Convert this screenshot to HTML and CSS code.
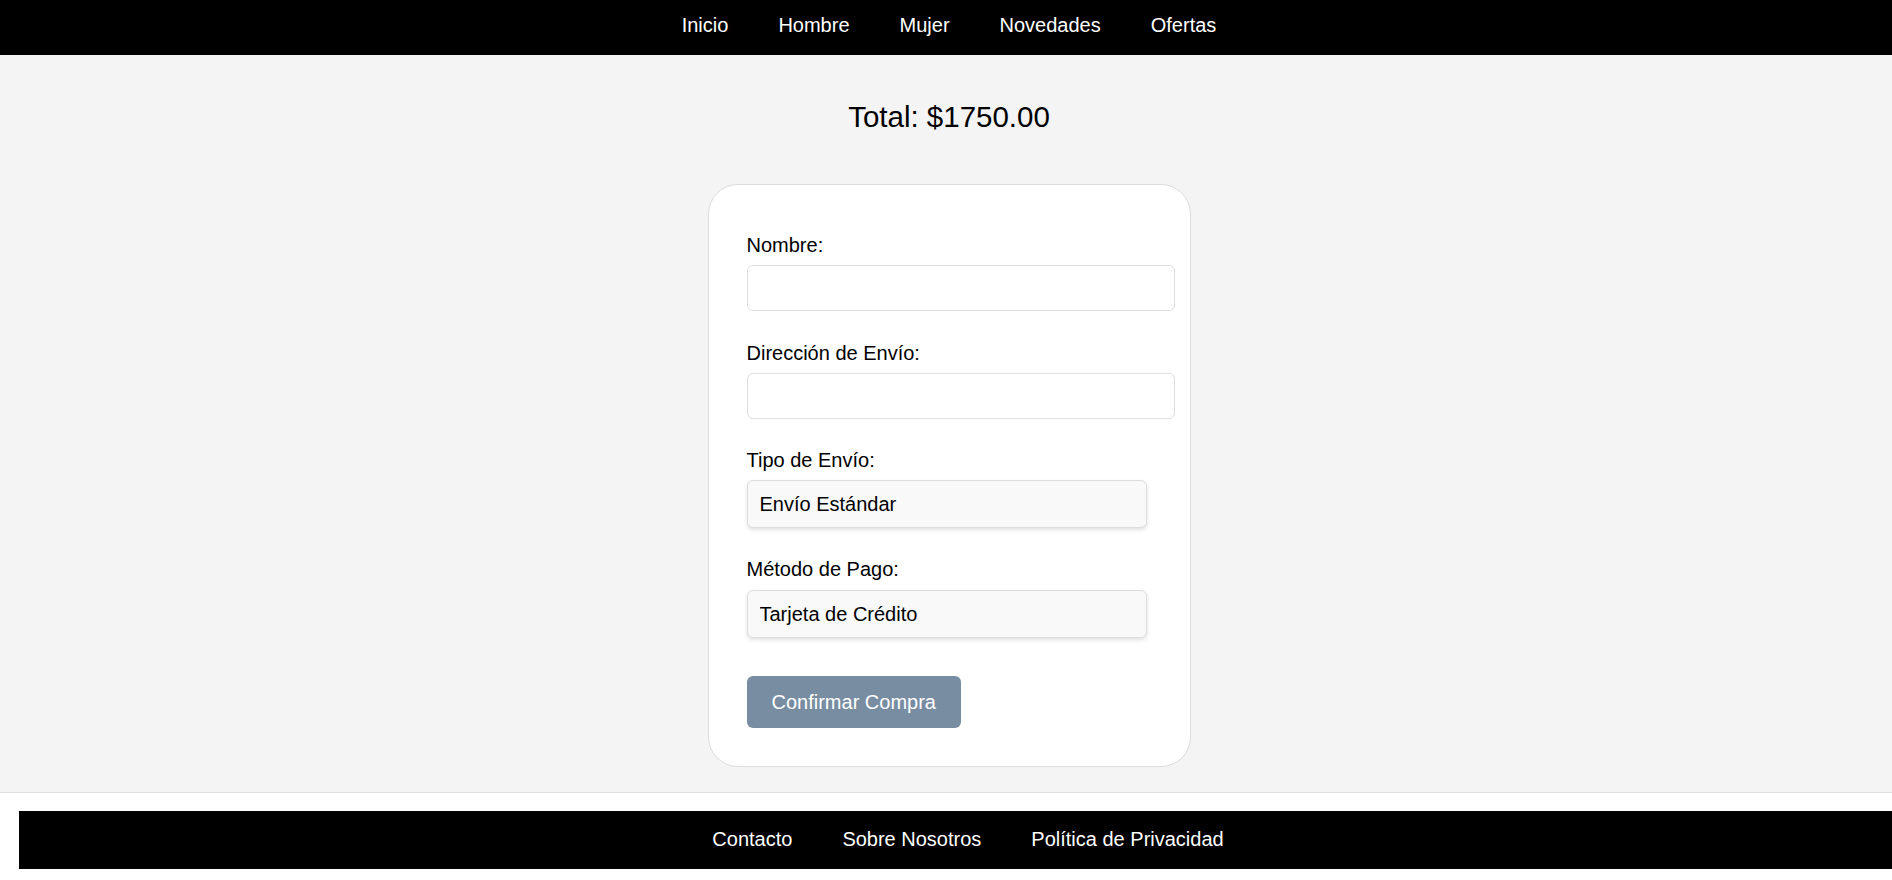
FILE: index.html
```html
<!DOCTYPE html>
<html lang="es">
<head>
<meta charset="utf-8">
<title>Confirmar Compra</title>
<link rel="stylesheet" href="styles.css">
</head>
<body>
<nav class="topnav">
  <ul class="topnav-list">
    <li><a href="#">Inicio</a></li>
    <li><a href="#">Hombre</a></li>
    <li><a href="#">Mujer</a></li>
    <li><a href="#">Novedades</a></li>
    <li><a href="#">Ofertas</a></li>
  </ul>
</nav>
<main class="main">
  <h2 class="total">Total: $1750.00</h2>
  <form class="card">
    <div class="field">
      <label class="label" for="nombre">Nombre:</label>
      <input class="input" id="nombre" type="text">
    </div>
    <div class="field field-second">
      <label class="label" for="direccion">Dirección de Envío:</label>
      <input class="input" id="direccion" type="text">
    </div>
    <div class="field">
      <label class="label" for="envio">Tipo de Envío:</label>
      <select class="select" id="envio"><option>Envío Estándar</option></select>
    </div>
    <div class="field">
      <label class="label label-pago" for="pago">Método de Pago:</label>
      <select class="select" id="pago"><option>Tarjeta de Crédito</option></select>
    </div>
    <button class="btn" type="button">Confirmar Compra</button>
  </form>
</main>
<footer class="site-footer">
  <div class="footer-bar">
    <a href="#">Contacto</a>
    <a href="#">Sobre Nosotros</a>
    <a href="#">Política de Privacidad</a>
  </div>
</footer>
</body>
</html>
```
FILE: styles.css
```css
html, body {
  margin: 0;
  padding: 0;
  overflow: hidden;
}
body {
  font-family: "Liberation Sans", Arial, Helvetica, sans-serif;
  background: #ffffff;
  color: #000;
}
a {
  color: #fff;
  text-decoration: none;
}
.topnav {
  background: #000;
  height: 55px;
  box-sizing: border-box;
  padding: 14px 0 0 6px;
}
.topnav-list {
  list-style: none;
  margin: 0;
  padding: 0;
  display: flex;
  justify-content: center;
  gap: 50px;
  font-size: 20px;
  line-height: 23px;
}
.main {
  background: #f4f4f4;
  padding: 45px 0 25px 6px;
  display: flex;
  flex-direction: column;
  align-items: center;
}
.total {
  margin: 0 0 51px;
  font-size: 29.5px;
  line-height: 33px;
  font-weight: normal;
}
.card {
  width: 405px;
  background: #fff;
  border: 1px solid #dcdcdc;
  border-radius: 30px;
  padding: 49px 38px 38px;
}
.field {
  margin-bottom: 30px;
}
.field-second {
  padding-top: 1px;
}
.label {
  display: block;
  font-size: 20px;
  line-height: 23px;
  margin-bottom: 8px;
}
.label-pago {
  margin-bottom: 9px;
}
.input {
  display: block;
  box-sizing: border-box;
  width: 428px;
  height: 46px;
  border: 1px solid #dddddd;
  border-radius: 6px;
  background: #fff;
  padding: 0 12px;
  font-family: inherit;
  font-size: 20px;
  margin: 0;
}
.select {
  display: block;
  box-sizing: border-box;
  width: 400px;
  height: 48px;
  border: 1px solid #dddddd;
  border-radius: 6px;
  background: #f9f9f9;
  padding: 0 12px;
  font-family: inherit;
  font-size: 20px;
  color: #000;
  -webkit-appearance: none;
  appearance: none;
  box-shadow: 0 2px 4px rgba(0, 0, 0, 0.12);
  margin: 0;
}
.btn {
  display: block;
  margin-top: 38px;
  height: 52px;
  padding: 0 25px;
  border: none;
  border-radius: 6px;
  background: #788da2;
  color: #fff;
  font-family: inherit;
  font-size: 20px;
}
.site-footer {
  border-top: 1px solid #dddddd;
  background: #fff;
  padding: 18px 0 11px 19px;
  overflow: hidden;
}
.footer-bar {
  background: #000;
  height: 58px;
  box-sizing: border-box;
  padding: 17px 0 0 25px;
  display: flex;
  justify-content: center;
  gap: 50px;
  font-size: 20px;
  line-height: 23px;
}
```
